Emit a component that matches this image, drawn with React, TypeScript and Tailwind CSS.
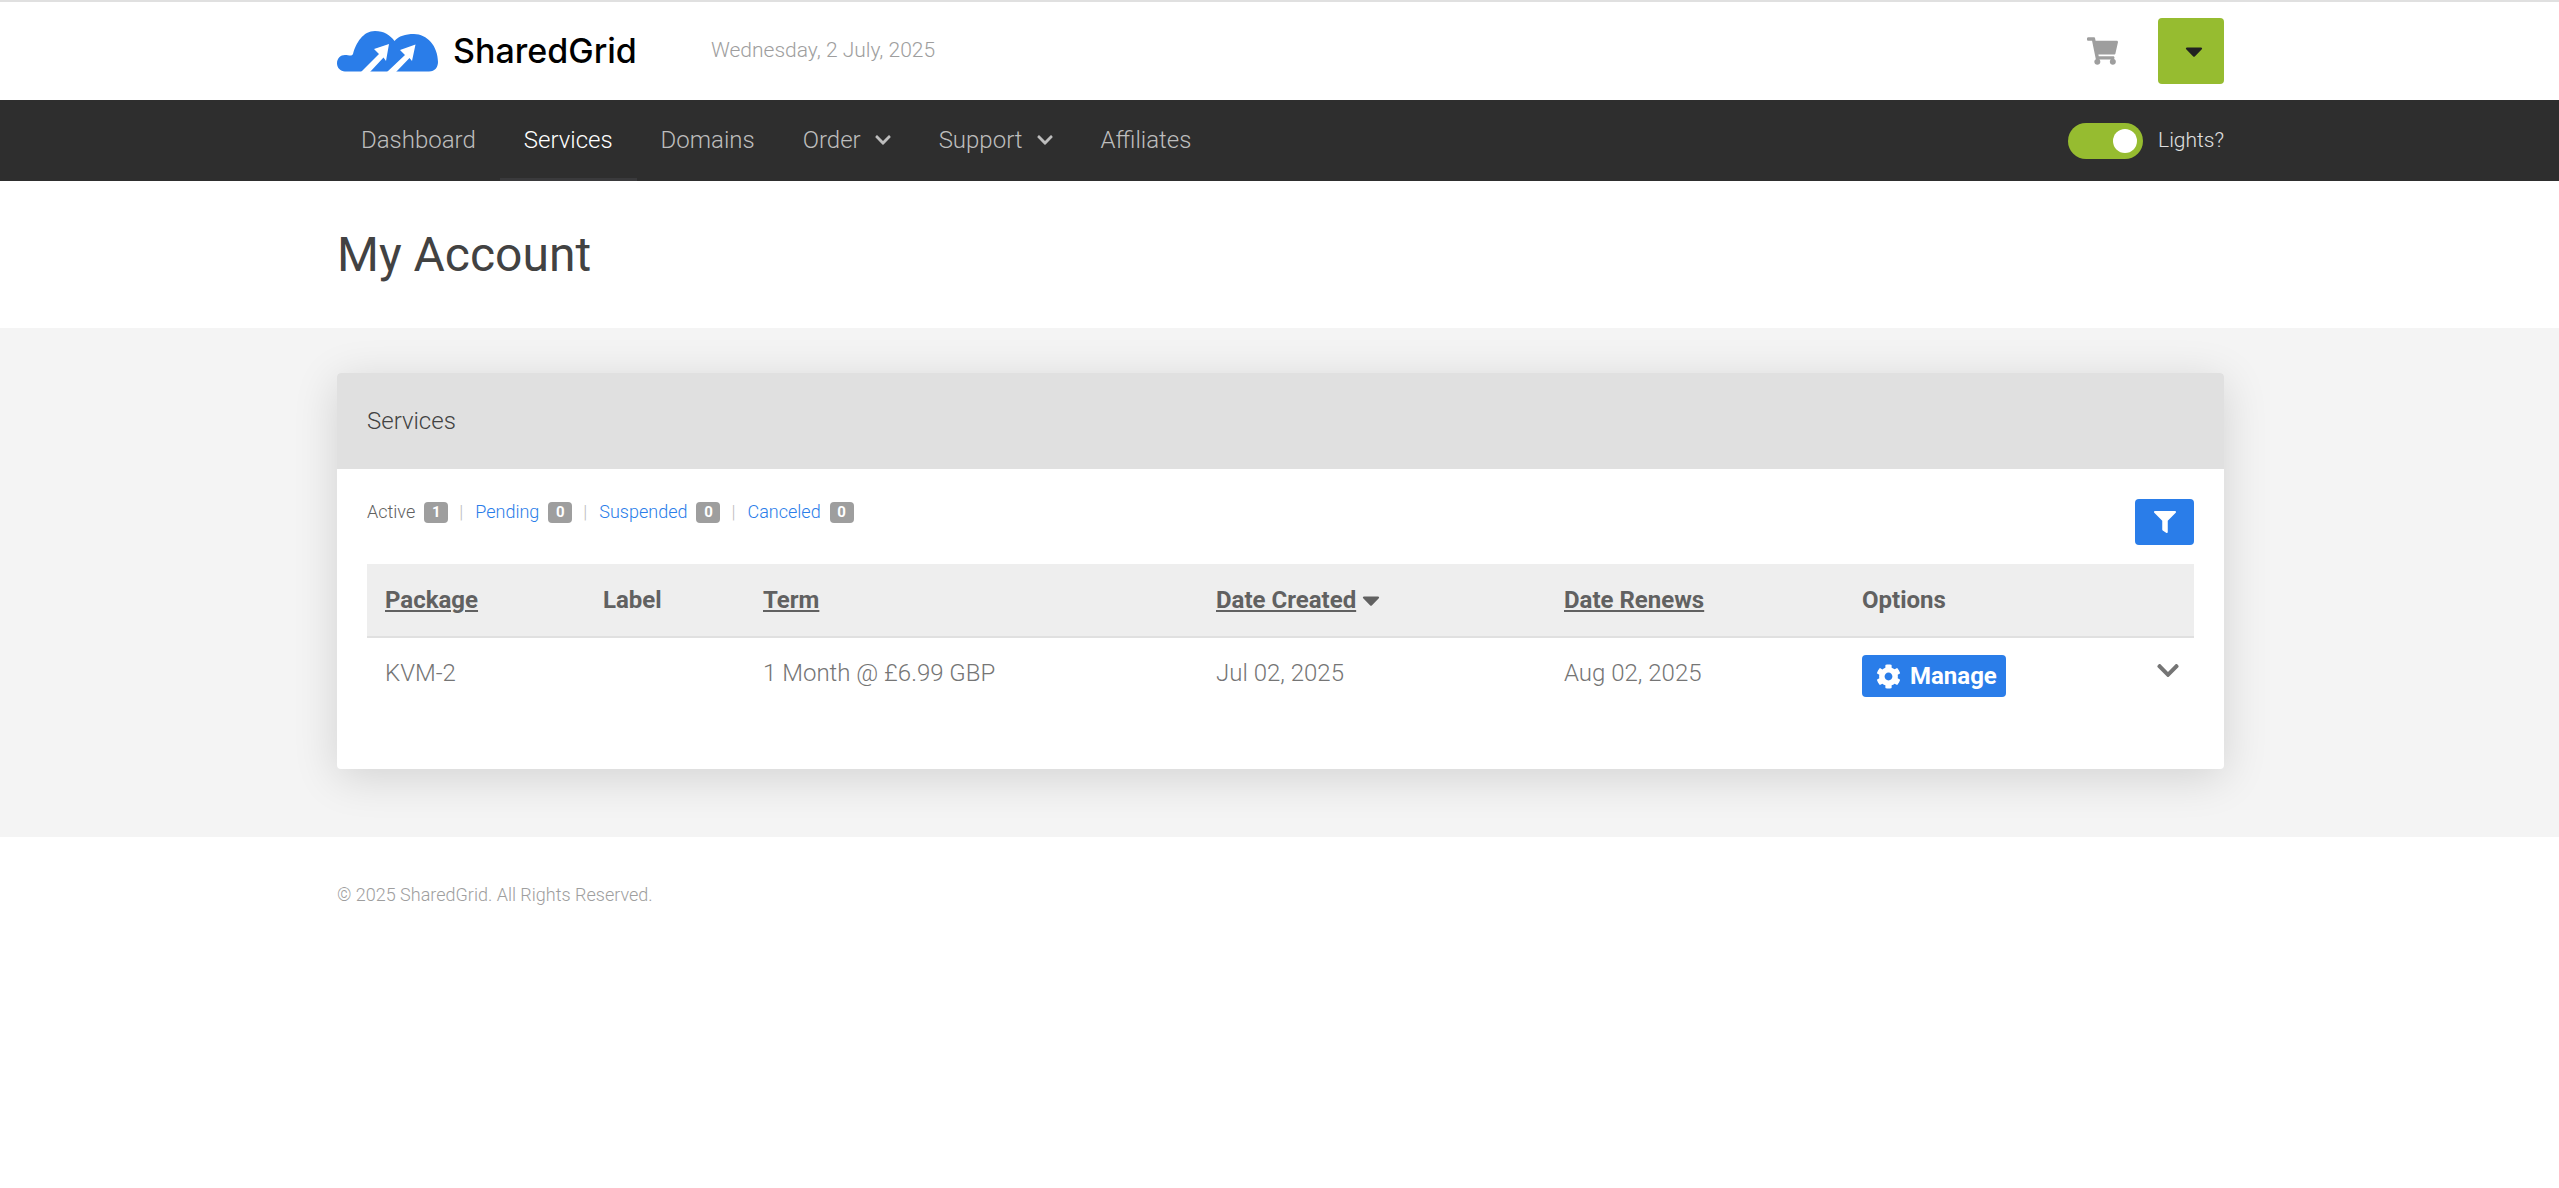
import { FaCaretDown, FaChevronDown, FaCog, FaFilter, FaShoppingCart } from "react-icons/fa";

const navItems = [
  { label: "Dashboard" },
  { label: "Services", active: true },
  { label: "Domains" },
  { label: "Order", caret: true },
  { label: "Support", caret: true },
  { label: "Affiliates" },
];

const statuses = [
  { label: "Active", count: 1, current: true },
  { label: "Pending", count: 0 },
  { label: "Suspended", count: 0 },
  { label: "Canceled", count: 0 },
];

const Logo = () => (
  <svg viewBox="0 0 101 41" className="w-[101px] h-[41px] shrink-0">
    <path
      fill="#2a7de9"
      d="M8 40.500C3.500 40.500 0 37 0 32.300C0 27.500 3.500 24 8 24C12 24 14.500 25.500 16 23C19 12 26 0 38 0C47 0 53 4 57.500 10C62 5 68 3 77 3C90 3 101 15 101 31C101 36 98 40.500 92 40.500Z"
    />
    <path fill="#fff" d="M52 13L37 18L42 23L24 41L33 41L46.500 26.500L49 30Z" />
    <path fill="#fff" d="M78.500 13.500L63 19L68 24L50 41L59 41L72.500 27L75 30Z" />
  </svg>
);

export default function App() {
  return (
    <div className="min-h-[1188px] bg-white font-['Roboto',sans-serif] font-light">
      {/* Top bar */}
      <div className="h-[100px] border-t-2 border-[#e0e0e0]">
        <div className="ml-[337px] w-[1887px] h-full flex items-center">
          <div className="flex items-center gap-[15px]">
            <Logo />
            <span className="w-[185px] font-['Inter',sans-serif] font-medium text-[34px] leading-none text-black whitespace-nowrap">
              SharedGrid
            </span>
          </div>
          <span className="ml-[73px] text-[21px] text-[#9e9e9e]">Wednesday, 2 July, 2025</span>
          <FaShoppingCart className="ml-auto text-[#9e9e9e] w-[31px] h-[28px] mr-[40px]" />
          <button className="w-[66px] h-[66px] rounded bg-[#96bc30] flex items-center justify-center">
            <FaCaretDown className="text-[#212121] w-[18px] h-[28px] ml-[6px]" />
          </button>
        </div>
      </div>

      {/* Nav */}
      <div className="h-[81px] bg-[#2e2e2e]">
        <div className="ml-[337px] w-[1887px] h-full flex items-stretch">
          {navItems.map((item) => (
            <a
              key={item.label}
              className={`flex items-center gap-[14px] px-[24px] pt-[1px] text-[24px] border-b-[3px] ${
                item.active ? "text-white border-[#3a3a3c]" : "text-[#bdbdbd] border-transparent"
              }`}
            >
              {item.label}
              {item.caret && <FaChevronDown className="w-[16px] h-[18px]" />}
            </a>
          ))}
          <div className="ml-auto flex items-center gap-[15px]">
            <div className="w-[75px] h-[36px] rounded-full bg-[#96bc30] flex items-center justify-end pr-[6px]">
              <div className="w-[24px] h-[24px] rounded-full bg-white" />
            </div>
            <span className="text-[21px] text-[#e0e0e0]">Lights?</span>
          </div>
        </div>
      </div>

      {/* Title */}
      <div className="h-[147px] flex items-center">
        <h1 className="ml-[337px] text-[48px] font-normal text-[#424242]">My Account</h1>
      </div>

      {/* Content */}
      <div className="h-[509px] bg-[#f4f4f4] pt-[45px]">
        <div className="ml-[337px] w-[1887px] h-[396px] rounded bg-white shadow-[0_8px_45px_rgba(0,0,0,0.14)] overflow-hidden">
          <div className="h-[96px] bg-[#e0e0e0] flex items-center px-[30px] text-[24px] text-[#424242]">Services</div>
          <div className="px-[30px]">
            <div className="h-[95px] flex items-start justify-between">
              <div className="flex items-center mt-[29px] text-[18px]">
                {statuses.map((s, i) => (
                  <div key={s.label} className="flex items-center">
                    {i > 0 && <span className="ml-[11px] mr-[12px] text-[#bdbdbd]">|</span>}
                    <span className={s.current ? "text-[#616161]" : "text-[#2a7de9]"}>{s.label}</span>
                    <span className="ml-[9px] w-[24px] h-[21px] mt-[1px] rounded bg-[#9e9e9e] text-white text-[15px] font-bold flex items-center justify-center">
                      {s.count}
                    </span>
                  </div>
                ))}
              </div>
              <button className="mt-[30px] w-[59px] h-[46px] rounded bg-[#2a7de9] flex items-center justify-center">
                <FaFilter className="text-white w-[22px] h-[22px]" />
              </button>
            </div>
            <table className="w-full table-fixed">
              <thead>
                <tr className="h-[73px] bg-[#eeeeee] border-b-2 border-[#e0e0e0] text-left text-[24px] font-bold text-[#616161]">
                  <th className="w-[236px] pl-[18px] font-bold"><span className="underline">Package</span></th>
                  <th className="w-[160px] font-bold">Label</th>
                  <th className="w-[453px] font-bold"><span className="underline">Term</span></th>
                  <th className="w-[348px] font-bold">
                    <span className="underline">Date Created</span>
                    <FaCaretDown className="inline w-[18px] h-[28px] ml-[6px] -mt-[3px]" />
                  </th>
                  <th className="w-[298px] font-bold"><span className="underline">Date Renews</span></th>
                  <th className="font-bold">Options</th>
                </tr>
              </thead>
              <tbody>
                <tr className="text-[24px] text-[#757575]">
                  <td className="pl-[18px] pt-[17px] align-top">KVM-2</td>
                  <td></td>
                  <td className="pt-[17px] align-top">1 Month @ £6.99 GBP</td>
                  <td className="pt-[17px] align-top">Jul 02, 2025</td>
                  <td className="pt-[17px] align-top">Aug 02, 2025</td>
                  <td className="pt-[17px] align-top">
                    <div className="flex items-start justify-between pr-[15px]">
                      <a className="w-[144px] h-[42px] rounded bg-[#2a7de9] text-white font-bold flex items-center pl-[14px] gap-[9px]">
                        <FaCog className="w-[25px] h-[25px]" />
                        Manage
                      </a>
                      <FaChevronDown className="w-[22px] h-[25px] mt-[3px] text-[#757575]" />
                    </div>
                  </td>
                </tr>
              </tbody>
            </table>
          </div>
        </div>
      </div>

      {/* Footer */}
      <div className="pt-[44px] pl-[337px] text-[18px] text-[#9e9e9e]">© 2025 SharedGrid. All Rights Reserved.</div>
    </div>
  );
}
